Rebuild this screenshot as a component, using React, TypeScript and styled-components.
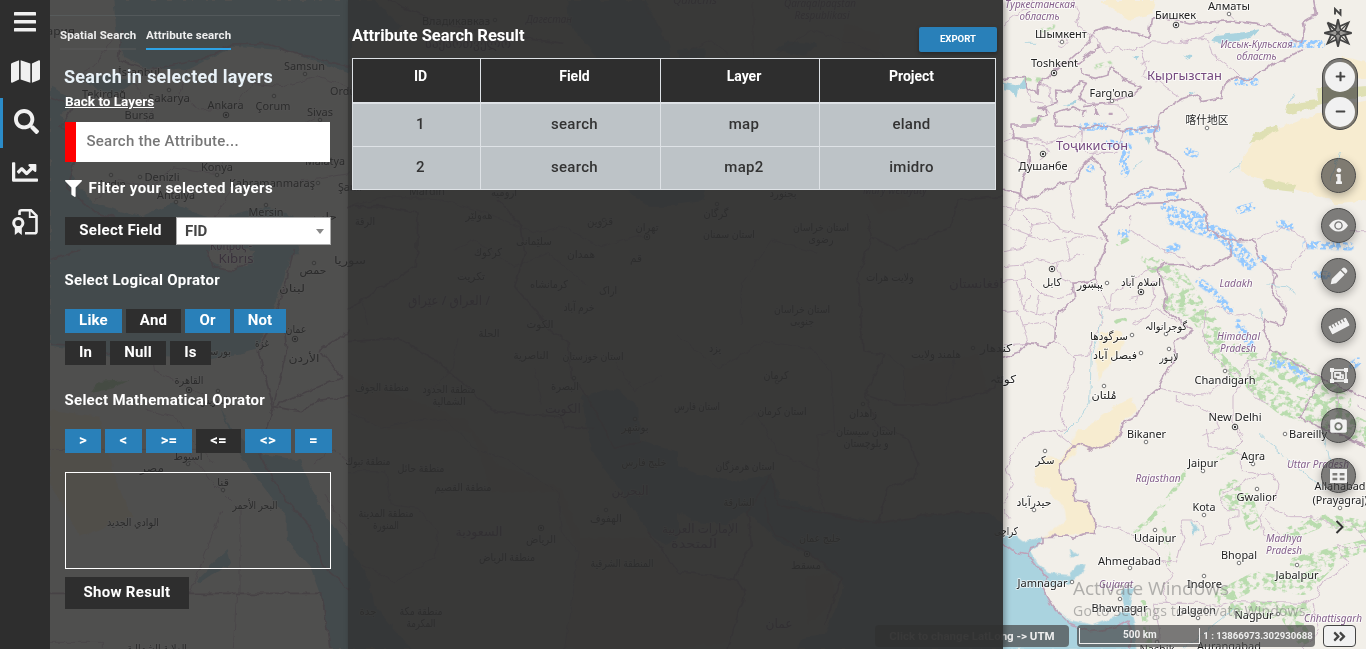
import React from 'react';
import styled, { createGlobalStyle, css } from 'styled-components';
import { FaMap, FaSearch, FaChartLine, FaFilter, FaInfo, FaRulerHorizontal, FaAngleDoubleRight, FaPlus, FaMinus } from 'react-icons/fa';
import { IoMdCamera } from 'react-icons/io';

const GlobalStyle = createGlobalStyle`
  * { box-sizing: border-box; }
  body { margin: 0; overflow: hidden; background: #f2efe9; }
  button, input { font: inherit; }
`;

const blue = '#2980b9';
const dark = '#2e2e2e';

/* ---------- map canvas ---------- */

const MapSvg = styled.svg`
  position: absolute;
  inset: 0;
  width: 1366px;
  height: 649px;
  .land { fill: #f7ecd0; }
  .olive { fill: #dfe0b4; }
  .water { fill: #aad3df; }
  .wood path { fill: none; stroke: #b9dcae; stroke-linecap: round; stroke-linejoin: round; }
  .ice path { fill: none; stroke: #94c9ff; stroke-linecap: round; stroke-linejoin: round; }
  .country { fill: none; stroke: #bda3b9; stroke-width: 5; stroke-linejoin: round; }
  .region { fill: none; stroke: #cdb6ca; stroke-width: 2.8; stroke-linejoin: round; }
  .river { fill: none; stroke: #aad3df; stroke-width: 2.5; }
`;

const MapText = styled.text<{ $kind: string }>`
  font-family: 'Noto Sans', 'DejaVu Sans', 'Noto Sans CJK SC', sans-serif;
  text-anchor: middle;
  paint-order: stroke;
  stroke: rgba(255, 255, 255, 0.65);
  stroke-width: 2px;
  stroke-linejoin: round;
  font-size: 11px;
  fill: #222;
  ${p => p.$kind === 'region' && css`font-style: italic; font-size: 10px; fill: #85608c;`}
  ${p => p.$kind === 'country' && css`font-size: 12.5px; fill: #75497f;`}
`;

type Label = [number, number, string, number, string?];
const labels: Label[] = [
  [1040, 8, 'Туркестанская', 70, 'region'], [1039.5, 20, 'область', 40, 'region'],
  [1175.5, 19, 'Бишкек', 41], [1229, 10, 'Алматы', 42], [1061, 38, 'Шымкент', 52],
  [1054.5, 67, 'Toshkent', 47], [1111.5, 97, "Farg'ona", 44], [1207, 124, '喀什地区', 43],
  [1256.5, 48, 'Иссык-Кульская', 72, 'region'], [1256.5, 60, 'область', 40, 'region'],
  [1184.5, 80, 'Кыргызстан', 75, 'country'], [1092, 150, 'Тоҷикистон', 72, 'country'],
  [1043, 170, 'Душанбе', 49], [1052, 286, 'كابل', 19], [1090, 288, 'پېښور', 26],
  [1141, 286, 'اسلام آباد', 40], [1236, 287, 'Ladakh', 33, 'region'],
  [1166, 330, 'گوجرانوالہ', 42], [1109, 340, 'سرگودھا', 38], [1115, 359, 'فیصل آباد', 44],
  [1169, 361, 'لاہور', 19], [1104, 399, 'مُلتان', 25],
  [1238.5, 340, 'Himachal', 43, 'region'], [1238, 352, 'Pradesh', 36, 'region'],
  [1225, 384, 'Chandigarh', 61], [1235, 421, 'New Delhi', 53], [1146.5, 438, 'Bikaner', 39],
  [1308, 438, 'Bareilly', 38], [1253, 460, 'Agra', 24], [1203, 467, 'Jaipur', 30],
  [1318, 467.5, 'Uttar Pradesh', 62, 'region'], [1158, 481.5, 'Rajasthan', 45, 'region'],
  [1045, 464, 'سکر', 19], [1034, 506, 'حیدرآباد', 35], [1204, 511, 'Kota', 23],
  [1256.5, 501, 'Gwalior', 40], [1340, 490, 'Allahabad', 51], [1340, 504, '(Prayagraj)', 55],
  [1155, 542, 'Udaipur', 42], [1284, 541.5, 'Madhya', 36, 'region'], [1284, 553.5, 'Pradesh', 36, 'region'],
  [1129.5, 564.5, 'Ahmedabad', 63], [1239, 559, 'Bhopal', 36], [1297, 579, 'Jabalpur', 43],
  [1042.5, 587, 'Jamnagar', 50], [1116, 587.5, 'Gujarat', 34, 'region'], [1204.5, 588, 'Indore', 35],
  [1119.5, 612, 'Bhavnagar', 56], [1197, 614, 'Jalgaon', 38], [1254, 618.5, 'Nagpur', 39],
  [1333, 622, 'Chhattisgarh', 58, 'region'], [1157, 653, 'Nashik', 35], [1229, 649.5, 'Aurangabad', 64],
  [1003, 383, 'کوئٹہ', 26], [1006, 535, 'کراچی', 24], [996, 352, 'کندهار', 32],
  [58, 35, 'тария', 34], [139, 76, 'İstanbul', 42], [304.5, 70, 'Samsun', 41], [104, 98, 'Tekirdağ', 44],
  [169, 102, 'Sakarya', 42], [225.5, 108.5, 'Ankara', 36], [273, 110, 'Çorum', 35], [320, 116, 'Sivas', 26],
  [139.5, 119, 'Bursa', 30], [343, 95, 'Ordu', 26], [217, 170.5, 'Konya', 32], [325, 165, 'Malatya', 40],
  [162, 181, 'Denizli', 35], [112, 188, 'Aydın', 28], [272, 187, 'Kahramanmaraş', 86], [176, 198.5, 'Antalya', 38],
  [266, 216, 'Mersin', 35], [350, 191, 'Şanlı', 24], [325, 220, 'حلب', 24],
  [231, 250, 'Κύπρος -', 42, 'country'], [236, 263, 'Kıbrıs', 35, 'country'], [350, 264, 'سوريا', 32],
  [313, 274, 'حمص', 27], [292, 292, 'لبنان', 26], [296, 333, 'عمان', 21], [262, 347, 'غزة', 14],
  [214, 355, 'بورسعيد', 34], [304, 362, 'الأردن', 31], [189, 384, 'القاهرة', 29], [214, 404, 'السويس', 28],
  [188, 460, 'أسيوط', 29], [152, 472, 'مصر', 24], [223, 486, 'قنا', 12], [255, 509, 'البحر الأحمر', 45],
  [133, 526, 'الوادي الجديد', 52], [157, 652, 'الولاية الشمالية', 60],
  [456, 25, 'Владикавказ', 68], [549, 23, 'Дагестан', 46, 'region'], [468, 48, 'საქართველო', 86, 'country'],
  [427, 195, 'Mardin', 36], [504, 196, 'ارومیه', 26], [365, 225, 'الرقة', 20], [479, 219, 'هەولێر', 27],
  [600, 225, 'قزوین', 26], [647, 231, 'تهران', 23], [534, 245, 'سلێمانی', 36], [488, 256, 'كركوك', 28],
  [581, 258, 'همدان', 28], [636, 262, 'قم', 12], [471, 280, 'تكريت', 28], [549, 288, 'کرمانشاه', 38],
  [608, 294, 'اراک', 18], [449, 305, 'العراق / عێراق /', 82, 'country'], [579, 311, 'خرم آباد', 31],
  [540, 328, 'الكوت', 27], [489, 337, 'الحلة', 21], [531, 359, 'الناصرية', 35], [593, 360, 'استان خوزستان', 61],
  [382, 391, 'منطقة الجوف', 54], [449, 393, 'منطقة الحدود', 53], [449, 405, 'الشمالية', 33],
  [565, 390, 'البصرة', 28], [563, 413, 'الكويت', 36, 'country'], [635, 431, 'بوشهر', 27],
  [368, 465, 'منطقة تبوك', 45], [421, 472, 'منطقة حائل', 47], [463, 491, 'منطقة القصيم', 57], [644, 466, 'خليج فارس', 45],
  [630, 495, 'البحرين', 37, 'country'], [606, 522, 'الهفوف', 32], [386, 517, 'منطقة المدينة', 55], [386, 529, 'المنورة', 26],
  [479, 536, 'السعودية', 47, 'country'], [541, 543, 'الرياض', 30], [507, 561, 'منطقة الرياض', 56], [622, 567, 'المنطقة الشرقية', 63],
  [368, 615, 'جدة', 17], [421, 615, 'منطقة مكة', 43], [421, 627, 'المكرمة', 29],
  [820, 7, 'Qaraqalpaqstan', 72, 'region'], [822, 19, 'Respublikasi', 55, 'region'], [695, 4, 'Qalacms', 44, 'region'],
  [783, 197, 'بجنورد', 27], [895, 194, 'Mary welaýaty', 64, 'region'], [716, 217, 'گرگان', 25],
  [729, 238, 'استان سمنان', 52], [821, 231, 'استان خراسان', 56], [821, 243, 'رضوی', 25],
  [890, 281, 'ولایت هرات', 48], [976, 288, 'افغانستان', 54, 'country'], [802, 313, 'استان خراسان', 56], [802, 325, 'جنوبی', 24],
  [715, 352, 'یزد', 12], [776, 379, 'کرمان', 25], [936, 358, 'هلمند ولایت', 50], [782, 415, 'استان کرمان', 49],
  [697, 410, 'استان فارس', 46], [863, 417, 'زاهدان', 28], [866, 435, 'استان سیستان', 60], [866, 447, 'و بلوچستان', 45],
  [745, 470, 'استان هرمزگان', 59], [739, 506, 'الشارقة', 31], [700, 533, 'الإمارات العربية', 76, 'country'], [694, 548, 'المتحدة', 46, 'country'],
  [820, 542, 'خليج عمان', 42], [806, 569, 'مسقط', 30], [779, 628, 'عمان', 27, 'country'],
];

const dots: [number, number][] = [
  [1229, 14], [1062, 42], [1112, 101], [1207, 128], [1107, 283], [1166, 334], [1132, 335], [1141, 353], [1169, 349],
  [1104, 386], [1225, 371], [1146, 442], [1285, 434], [1253, 464], [1203, 471], [1045, 451], [1034, 510], [1204, 515],
  [1257, 489], [1340, 508], [1155, 530], [1130, 568], [1239, 563], [1297, 565], [1072, 582], [1204, 576], [1120, 599],
  [1198, 618], [1278, 614], [1157, 642], [305, 74], [169, 90], [274, 96], [320, 120], [111, 175], [140, 177], [217, 175],
  [318, 183], [176, 202], [266, 205], [314, 263], [218, 391], [188, 464], [223, 490], [495, 20], [604, 220], [574, 378],
  [635, 419], [606, 510], [717, 204], [777, 382], [863, 404], [973, 348],
];
const capitals: [number, number][] = [[1176, 25], [1054, 73], [1043, 154], [1052, 269], [1141, 292], [1235, 427], [226, 115], [295, 339], [189, 390], [647, 237], [541, 528], [807, 554]];

const MapCanvas = () => (
  <MapSvg viewBox="0 0 1366 649">
    <defs>
      <filter id="speckle" x="-5%" y="-5%" width="110%" height="110%">
        <feTurbulence type="fractalNoise" baseFrequency="0.14 0.18" numOctaves="3" seed="4" result="n" />
        <feColorMatrix in="n" type="matrix" values="0 0 0 0 0  0 0 0 0 0  0 0 0 0 0  7 0 0 0 -3.2" result="m" />
        <feComposite in="SourceGraphic" in2="m" operator="in" />
      </filter>
      <filter id="lakes" x="-5%" y="-5%" width="110%" height="110%">
        <feTurbulence type="fractalNoise" baseFrequency="0.27" numOctaves="2" seed="9" result="n" />
        <feColorMatrix in="n" type="matrix" values="0 0 0 0 0  0 0 0 0 0  0 0 0 0 0  8 0 0 0 -3.5" result="m" />
        <feComposite in="SourceGraphic" in2="m" operator="in" />
      </filter>
      <filter id="rough" x="-3%" y="-3%" width="106%" height="106%">
        <feTurbulence type="fractalNoise" baseFrequency="0.12" numOctaves="2" seed="2" />
        <feDisplacementMap in="SourceGraphic" scale="6" xChannelSelector="R" yChannelSelector="G" />
      </filter>
    </defs>
    <rect width="1366" height="649" fill="#f2efe9" />

    <g filter="url(#rough)">
      <g transform="scale(.33333)">
        <path className="water" d="M340 0 350 100 370 170 440 205 560 210 700 140 850 150 1050 220V0ZM250 240 330 220 400 250 330 290ZM150 260 230 300 180 350 230 420 210 520 280 610 420 650 520 610 640 660 800 620 880 650 900 760H150Z" />
      </g>
      <g transform="translate(0 250) scale(.33333)">
        <path className="water" d="M150 0H880L850 90 820 180 770 300 620 330 450 310 380 330 230 300 150 290ZM660 470 700 540 770 610 900 630 960 770 1050 900V1197H990L970 1060 930 950 860 870V800L720 620ZM590 990 680 900 690 940 600 1000Z" />
        <path fill="#f2efe9" d="M620 10 680-10 760 0 740 50 680 60 640 40Z" />
        <path fill="#b9dcae" d="M270 430 300 395 390 390 340 415Z" />
        <path className="land" d="M150 480 300 500 350 700 400 800 240 860 150 700Z" />
      </g>
      <g transform="translate(348 0) scale(.33333)">
        <path className="water" d="M0 0H80L160 80 60 130 0 100ZM655 0H890L960 130 990 300 940 400 990 570V620L900 620 840 570 740 160 660 70Z" />
      </g>
      <g transform="translate(678 0) scale(.33333)">
        <path className="water" d="M0 150 80 145V170L0 180ZM0 560H80V600L0 610ZM290 150 330 125 420 130 380 170Z" />
        <path className="land" d="M500 70 600 100 620 500 700 620 600 640 450 400Z" />
      </g>
      <g transform="translate(348 325) scale(.33333)">
        <path className="water" d="M700 210 810 190 870 250 880 350 990 380V640L950 660 900 620 820 500 730 380ZM0 660 60 760 80 840 190 972H0Z" />
        <path className="land" d="M0 150 200 230 360 290 450 420 640 490 700 640 900 640 990 740V972H650L690 680 620 500 430 500 370 320 100 310 0 250Z" />
      </g>
      <g transform="translate(678 325) scale(.33333)">
        <path className="water" d="M0 420 60 450 180 470 280 450 310 520 430 560 600 590 750 570 930 560 975 600V972H360L370 940 440 930 500 780 400 690 300 650 240 590 200 560 140 600 50 590 0 560Z" />
        <path className="land" d="M0 740 170 760 200 810 150 950 0 972ZM680 130 900 90 930 200 770 240 680 230ZM380 760 460 740 470 830 390 900Z" />
      </g>
      <g transform="translate(1003 0) scale(.33333)">
        <path className="land" d="M1100 300 1000 320 870 370 770 400 720 470 710 510 740 530 800 545 900 575 960 590 1000 610 1100 600ZM290 0H460L450 40 380 60 330 30ZM1020 170 1100 190V240L1000 235Z" />
        <path className="olive" d="M845 345 850 315 900 305 945 300 940 265 1100 255V285L960 315 890 335ZM738 435 755 400 820 375 827 390 780 410ZM775 545 790 535 830 545 880 555 870 575 800 568Z" />
        <path className="water" d="M628 122 640 105 700 100 768 88 750 108 690 125 650 128ZM0 245 50 255 65 232 75 262 45 268 40 290 20 270 0 268ZM390 170 410 172 400 180ZM540 165 565 168 560 178ZM180 318 225 300 220 312ZM425 415 450 412 435 435ZM555 280 580 275 565 287Z" />
      </g>
      <g transform="translate(1003 215) scale(.33333)">
        <path className="land" d="M290 355 350 345 365 380 320 450 285 500 280 430ZM385 550 405 590 355 620 345 664H235L270 620 330 580Z" />
      </g>
      <g transform="translate(1003 430) scale(.33333)">
        <path className="land" d="M225-2H360L325 45 270 60 225 45 215 75 170 105 175 145 215 150V210L250 215 275 270V310L120 320 190 270 185 240 140 180 95 160 100 110 130 80 170 90 200 50Z" />
        <path className="water" d="M-10 310 40 320 60 335 120 320 110 345 80 360 105 400 140 430 200 435 220 405 248 403 235 430 200 460 120 475 150 530 200 570 270 585 340 560 360 540 355 490 370 465 395 470 385 500 380 530 395 590 400 660H-10ZM200 358 225 375 205 380ZM565 270 590 300 570 318Z" />
      </g>
    </g>

    <g className="wood" filter="url(#speckle)">
      <g transform="translate(1003 215) scale(.33333)">
        <path strokeWidth="50" d="M455 150 520 180 560 240 590 290 630 340" />
        <path strokeWidth="55" d="M500 260 580 290 640 370" />
        <path strokeWidth="30" d="M600 340 650 430 700 480M700 400 780 440 840 480" />
        <path strokeWidth="70" d="M760 500 850 570 960 600 1080 650M830 440 930 510 1010 560" />
        <path strokeWidth="14" d="M345 85 380 70M420 130 440 150M340 320 365 315" />
      </g>
      <g transform="translate(1003 430) scale(.33333)">
        <path strokeWidth="45" d="M670 190 730 210 750 280M690 220 690 170" />
        <path strokeWidth="14" d="M560 110 500 200 440 270 390 310M620 100 700 60M480 280 500 400" />
        <path strokeWidth="40" d="M860 310 960 270 1080 290M880 400 1080 350" />
        <path strokeWidth="50" d="M660 500 760 450 900 470 970 400M700 540 900 540M860 560 900 620" />
        <path strokeWidth="20" d="M420 520 440 657M1000 0 1089 40" />
      </g>
      <g transform="translate(1003 0) scale(.33333)">
        <path strokeWidth="14" d="M90 360 110 355M65 235 110 240M280 200 320 190M120 90 150 80" />
      </g>
    </g>

    <g className="ice" filter="url(#lakes)">
      <g transform="translate(1003 0) scale(.33333)">
        <path strokeWidth="24" d="M870 132H955M485 620 540 640 600 650M375 395 460 385M320 430 375 440 360 490M240 380H310M410 585 440 582M500 588H515M710 630 745 620M705 245H755M365 520 370 510M260 505H265M555 455 575 462" />
      </g>
      <g transform="translate(1003 215) scale(.33333)">
        <path strokeWidth="42" d="M510 10 600 40 660 60 700 100 740 145" />
        <path strokeWidth="24" d="M590 200 630 230 680 285M705 325 720 350 740 385M910 90 980 92 1040 95M810 445 860 450 910 490M500 105 520 95M355 55H370M830 25 860 35M775 130H780M1050 450 1065 440M940 180H970" />
      </g>
    </g>

    <g filter="url(#rough)">
      <g transform="translate(1003 0) scale(.33333)">
        <path className="region" d="M0 75 45 40 80 20 90 0M210 0 230 40 220 75 275 110 262 125M75 262 80 305 120 312 140 340M108 250 140 262 145 310M225 300 250 310 350 315 375 345 370 360 330 378M0 425 30 415 110 420 130 430 200 405 220 412 240 390M0 455 15 470 60 490M75 425 130 440 140 460 110 480M445 125 380 155 340 140 310 160 275 110M415 150 430 195 420 230 455 235 490 265 530 290M415 195 440 180M445 125 530 130 600 110 640 85M530 125 600 115 620 125 630 165 650 180 690 210 715 235M30 415 20 400M205 550 200 600 215 660M0 620 60 630 100 625 140 640 150 660M240 385 235 440 260 460 340 460 360 390M215 520 280 450M165 125 185 115 195 125 180 140 165 135M670 35 690 55M55 580 20 660" />
        <path className="country" d="M0 235 65 233 75 262 105 280 108 250 155 215 200 180 260 125 275 95 320 82 400 100 438 112 445 62 480 52 560 72 600 68 680 62 740 70 800 78 860 110 895 130 905 90 900 65 925 50 940 45 932 0M900 150 830 185 765 215 735 240 690 235 660 260 655 295 595 305 585 285 540 295 500 320 470 340 465 380 420 385 360 395 320 380 290 378 240 382 160 378 155 340 210 320 245 335 240 350M230 205 245 225 280 235 315 225 320 200 340 215 360 240 415 262 390 285 320 305 280 315 240 320M160 310 158 270 200 275 235 245 250 250 228 290 250 310M160 310 105 325 130 325 130 345 110 350 100 375 27 375 30 415 75 425 80 500 60 530 55 580 70 600M0 568 50 580 70 600 120 580 165 550 215 545 240 500 265 472 290 490 305 520 308 610 325 625 400 575 440 558 510 570 550 565 540 515 500 460 465 450 455 400 465 380M310 660 340 625 420 608 500 605 560 595 600 625 615 660M155 215 175 190 230 185 290 140 280 130" />
        <path fill="#bda3b9" d="M270 345 278 320 290 345ZM320 335H332V345H320Z" />
        <path className="river" d="M680 520 715 490M390 505 415 485M870 280 860 310M980 540 1010 460M95 130H60" />
      </g>
      <g transform="translate(1003 215) scale(.33333)">
        <path className="region" d="M380 0 380 45 440 80 490 110 545 130 570 160M750 75 830 40 880 50 905 75 910 100 860 160 810 165M810 165 815 215 850 285M0 30 80 60 90 30 60 0M90 30 150 20 180 50 250 60 300 70M0 110 60 100 80 60 140 80 190 65M130 0 170 45M0 155 60 150 100 130 160 145 200 130 190 80 240 65M160 145 175 190 215 205M60 150 70 190 0 200M70 190 120 240 180 250 215 230M40 200 60 280 110 300 155 290M0 290 40 285 60 330 130 320 155 340M80 240 60 285M60 330 75 385M110 240 100 300M240 120 200 130M0 390 75 385M275 195 320 280 325 235 360 215 400 190 440 160 475 170M320 280 285 275 300 325 270 360 260 420 215 425 210 470 180 550 175 600 190 645 95 650 80 664M155 375 215 425M320 280 380 285 440 275 455 240 450 200 490 190M385 325 430 310 460 280 520 320M385 325 400 330 440 300M400 265 410 245 380 250M600 340 605 290 640 270 670 290 700 300 740 295 780 320M600 340 620 410 660 450 700 480 720 495 690 540V620L720 664M465 520 540 535 600 540 620 530 660 500 680 470M520 540V560L590 575 630 600 650 640 600 664M705 475 735 440 790 430 800 405M735 440 740 520 760 550 800 570M1000 510 1010 664M1040 50 1089 50M1060 570 1089 590" />
        <path className="country" d="M320 0 290 35 315 80 280 160 275 195 210 205 215 250 180 285 160 300 155 375 130 395 75 385 45 415 0 430M610 0 615 45 650 60 680 75 685 120 630 150 580 160 520 145 480 145 465 165 475 200 490 240 485 280 530 320 570 345 545 370 510 380 520 430 490 470 465 520 430 550 405 600 360 625 350 664M650 60 700 78 750 75 770 130 810 165 820 180 800 220 830 265 850 290 840 330 785 315 780 345 800 380V405L850 430 920 470 1000 510 1089 550M950 500 905 580 890 610 960 640 1089 690" />
        <path className="river" d="M300 290 285 360 265 420 260 560 220 620 180 660M790 210 850 215 880 235M770 280 775 320" />
      </g>
      <g transform="translate(1003 430) scale(.33333)">
        <path className="region" d="M0 220 30 165 10 120 30 60 90 5 150 0 200 40 220 50M20 265 0 240M275 290 350 295 390 320 440 350 480 395 520 400 530 360 545 330 530 290 540 270 575 270 600 290 605 320 590 350 630 340 640 320 680 310V265L705 260V240L665 235 650 210 660 190 770 135 750 125 715 125V80L690 60 720 30 700 0M610 0 620 50 690 60M770 135 810 130 825 160 820 200 790 230 770 260 780 310 810 330 830 320 800 280 780 260M800 230 860 260 930 260 1000 290 1040 270 1089 330M1000 350 1035 400 990 440 960 450 940 500 900 520 700 515 640 530 600 520 490 520 480 470 510 430 480 395M465 657 470 600 450 520 495 520M930 520 950 600 900 657M1089 350 1000 350" />
        <path className="country" d="M355 0 330 40 270 60 225 40 200 60 170 105 175 145 215 150V210L250 215 275 270V310L240 312 210 325 190 318 120 320V340L80 350 75 375M0 340 30 365 75 375 105 415 135 440 120 475 150 530 200 580 260 605 330 595 375 570 385 600 380 657M975-12 1040 30 1089 50" />
        <path className="river" d="M770 10 800 40 860 90 900 130 960 170M960 0 975 80 985 150M540 657 700 530" />
      </g>
      <g transform="scale(.33333)">
        <path className="region" d="M340 120 280 200 200 240M560 210 540 280 600 330 700 320 760 250 850 260 950 230 1050 260M400 250 460 330 420 420 500 440 560 400 680 420 720 380 850 400 960 340M230 420 330 400M280 610 340 540 460 560 520 500 640 520 700 450 820 480M640 660 700 560 820 560 1050 520" />
        <path className="country" d="M365 90 355 180 440 210 600 180 700 135 800 130 880 160 1050 200M150 290 220 320 180 380 240 430 200 560 290 640 420 670" />
      </g>
      <g transform="translate(0 250) scale(.33333)">
        <path className="region" d="M150 598H640M455 310 460 360 540 400 620 440 700 470M560 600 640 700 680 740 720 780V1030M665 780 570 1030M440 480 520 500 640 640M940 640 1000 600 1050 640M150 1177H310V1197M710 1030 700 1197M970 730 1050 850" />
        <path className="country" d="M150 30 240 0M620 0 640 50 700 60 760 30M880 0 860 90 830 180 775 305 820 470 860 300 850 200M960 300 1050 240M960 300 1025 380 820 470M820 470 900 485 960 450 1050 440M820 470 780 620 850 740 930 830 970 950 1050 1020M150 285 250 290 380 325M150 1030H965L990 1197" />
      </g>
      <g transform="translate(348 0) scale(.33333)">
        <path className="region" d="M0 620 120 590 280 600 420 640 560 700 640 680 760 740 900 700M320 750 380 720 500 800 600 760 720 860M40 900 60 975M880 0 960 130" />
        <path className="country" d="M0 620 100 620 210 640 205 800 100 860 0 930M120 0 280 70 480 110 650 130M450 600 520 680 530 760 500 860 600 975" />
      </g>
      <g transform="translate(348 325) scale(.33333)">
        <path className="region" d="M0 260 100 310 220 280 300 290 380 370 470 400 630 500 640 620 690 680 650 972M0 440H110L130 540 210 550 270 620 260 700 140 770 40 720M330 40 310 140 230 210M560 130 580 240M800 110 860 200 940 150" />
        <path className="country" d="M0 50 150 40 270 110 440 260 640 275 650 310 740 310M580 0 660 50 670 150 720 220 800 370 880 350M900 620 990 740" />
      </g>
      <g transform="translate(678 325) scale(.33333)">
        <path className="region" d="M0 30 120 130 260 50 400 70 460 140 470 320 420 330 420 480 440 560M680 230V130L620 80M800 230 830 90M190 300 230 260 300 380 420 440" />
        <path className="country" d="M550 0 555 80 620 90 560 210 660 240 770 240 930 200 975 160M560 210 600 300 690 340 720 420 710 460 630 490 600 595 750 570 930 560M0 740 170 760 200 800 150 972M170 760 220 660 210 560 280 450 300 540 600 595M260 520 280 620 400 690 490 760 440 900" />
      </g>
      <g transform="translate(678 0) scale(.33333)">
        <path className="region" d="M225 0V170M0 170 100 120 150 160M190 975V850L280 720 420 760M300 160 400 90 520 130 620 170" />
        <path className="country" d="M570 640 580 710 660 750 820 680 840 600 975 590M580 710 540 830 550 975" />
      </g>
    </g>

    {dots.map(([x, y]) => <circle key={`${x}-${y}`} cx={x} cy={y} r="1.8" fill="#fff" stroke="#555" strokeWidth=".8" />)}
    {capitals.map(([x, y]) => (
      <g key={`${x}-${y}`}>
        <circle cx={x} cy={y} r="2.8" fill="#fff" stroke="#333" strokeWidth=".9" />
        <circle cx={x} cy={y} r="1.2" fill="#333" />
      </g>
    ))}
    {labels.map(([x, y, t, w, kind]) => (
      <MapText key={`${t}-${x}-${y}`} x={x} y={y} $kind={kind ?? 'city'} textLength={w} lengthAdjust="spacingAndGlyphs">{t}</MapText>
    ))}
  </MapSvg>
);

/* ---------- shell ---------- */

const Screen = styled.div`
  position: relative;
  display: flex;
  width: 1366px;
  height: 649px;
  overflow: hidden;
  font-family: Roboto, 'Liberation Sans', sans-serif;
  color: #fff;
`;

const Rail = styled.nav`
  position: relative;
  z-index: 2;
  display: flex;
  flex-direction: column;
  width: 50px;
  background: ${dark};
`;

const RailItem = styled.a<{ $active?: boolean; $first?: boolean }>`
  display: flex;
  align-items: center;
  justify-content: center;
  height: ${p => (p.$first ? 48 : 50)}px;
  padding: ${p => (p.$first ? '0 0 5px' : '0 0 3px')};
  border-left: 3px solid ${p => (p.$active ? '#2b8cc9' : 'transparent')};
  border-right: ${p => (p.$active ? 0 : 3)}px solid transparent;
  color: #f1f1f1;
`;

const SidePanel = styled.aside`
  position: relative;
  z-index: 2;
  width: 298px;
  padding: 15px 16px 0 15px;
  background: rgba(46, 46, 46, 0.83);
`;

const Tabs = styled.div`
  display: flex;
  gap: 10px;
  width: 290px;
  height: 35px;
  margin-left: -15px;
  padding-left: 10px;
  border-top: 1px solid rgba(90, 96, 97, 0.7);
`;

const Tab = styled.a<{ $active?: boolean }>`
  width: ${p => (p.$active ? 85 : 76)}px;
  padding-top: 12px;
  border-bottom: 2px solid ${p => (p.$active ? '#2ea3e6' : 'rgba(90, 90, 90, 0.5)')};
  font-size: 11.5px;
  font-weight: 700;
  letter-spacing: 0.12px;
  line-height: 15px;
  white-space: nowrap;
  color: #eee;
`;

const Title = styled.h2`
  margin: 16px 0 0 -1px;
  font-size: 18px;
  font-weight: 700;
  letter-spacing: 0.28px;
  line-height: 22px;
  color: #e8f1f7;
  white-space: nowrap;
`;

const BackLink = styled.a`
  display: block;
  margin: 4px 0 0;
  font-size: 13.5px;
  font-weight: 700;
  line-height: 18px;
  text-decoration: underline;
`;

const SearchInput = styled.input`
  display: block;
  width: 265px;
  height: 40px;
  margin-top: 12px;
  padding: 0 10px 2px 10.5px;
  border: 0;
  border-left: 11px solid #f00;
  background: #fff;
  font-size: 15px;
  font-weight: 500;
  letter-spacing: 0.25px;
  outline: none;
  &::placeholder { color: #777; opacity: 1; }
`;

const Heading = styled.h3<{ $top: number; $track?: number }>`
  display: flex;
  align-items: center;
  gap: 7px;
  margin: ${p => p.$top}px 0 0 -0.5px;
  font-size: 15px;
  font-weight: 700;
  letter-spacing: ${p => p.$track ?? 0.27}px;
  line-height: 20px;
  white-space: nowrap;
`;

const FieldRow = styled.div`
  display: flex;
  height: 28px;
  margin: 19px 0 0;
`;

const FieldLabel = styled.span`
  width: 111px;
  background: ${dark};
  font-size: 15px;
  font-weight: 700;
  letter-spacing: 0.3px;
  line-height: 26px;
  text-align: center;
`;

const Select = styled.div`
  display: flex;
  justify-content: space-between;
  align-items: center;
  width: 155px;
  padding: 0 6px 0 8px;
  border: 1px solid #aaa;
  background: #fff;
  color: #444;
  font-size: 15px;
  font-weight: 700;
  &::after {
    content: '';
    border: 4px solid transparent;
    border-top: 5px solid #888;
    border-bottom: 0;
  }
`;

const ButtonRow = styled.div<{ $top: number }>`
  display: flex;
  gap: 4px;
  margin-top: ${p => p.$top}px;
`;

const OpButton = styled.button<{ $w: number; $on?: boolean }>`
  flex: none;
  width: ${p => p.$w}px;
  height: 24px;
  padding: 0 0 2px;
  border: 0;
  background: ${p => (p.$on ? blue : dark)};
  color: #fff;
  font-size: 15px;
  font-weight: 700;
  letter-spacing: 0.2px;
  line-height: 22px;
`;

const QueryBox = styled.div`
  width: 266px;
  height: 97px;
  margin-top: 19px;
  border: 1px solid #fff;
`;

const ShowButton = styled.button`
  width: 124px;
  height: 32px;
  margin-top: 8px;
  padding: 0 0 2px;
  border: 0;
  background: ${dark};
  color: #fff;
  font-size: 15px;
  font-weight: 700;
  letter-spacing: 0.3px;
`;

const ResultPanel = styled.main`
  position: relative;
  z-index: 2;
  width: 655px;
  padding: 27px 6px 0 4px;
  background: rgba(46, 46, 46, 0.95);
  box-shadow: 2px 0 6px rgba(0, 0, 0, 0.35);
`;

const ResultHead = styled.header`
  display: flex;
  justify-content: space-between;
  height: 31px;
  h2 { margin: -1px 0 0; font-size: 16.5px; font-weight: 700; line-height: 20px; }
`;

const ExportButton = styled.button`
  width: 78px;
  height: 25px;
  padding: 0 0 2px;
  border: 0;
  border-radius: 2px;
  background: ${blue};
  box-shadow: 0 2px 4px rgba(0, 0, 0, 0.35);
  color: #fff;
  font-size: 9.6px;
  font-weight: 700;
`;

const Table = styled.table`
  width: 644px;
  table-layout: fixed;
  border-collapse: collapse;
  th, td { border: 1px solid #dee2e6; padding: 0 0 0 8px; text-align: center; }
  th { height: 44px; padding-bottom: 9px; border-bottom-width: 2px; background: ${dark}; font-size: 14px; font-weight: 700; }
  td { height: 43.500px; background: #bdc3c7; color: #333; font-size: 15px; font-weight: 500; letter-spacing: 0.3px; padding-bottom: 1px; }
`;

const rows = [['1', 'search', 'map', 'eland'], ['2', 'search', 'map2', 'imidro']];

/* ---------- map controls ---------- */

const Controls = styled.div`
  display: flex;
  flex: 1;
  flex-direction: column;
  align-items: flex-end;
  position: relative;
  z-index: 1;
  padding: 7px 10px 0 0;
`;

const Compass = styled.svg`
  width: 36px;
  height: 44px;
`;

const ZoomPill = styled.div`
  display: flex;
  flex-direction: column;
  align-items: center;
  gap: 5px;
  width: 36px;
  height: 72px;
  margin: 7px -2px 28px 0;
  padding: 2.5px 0 0;
  border: 1px solid #444;
  border-radius: 18px;
  background: rgba(60, 60, 60, 0.65);
`;

const ZoomButton = styled.button`
  display: grid;
  place-items: center;
  width: 30px;
  height: 30px;
  padding: 0;
  border: 0;
  border-radius: 50%;
  background: #f1f1f1;
  color: #444;
`;

const RoundButton = styled.button`
  display: grid;
  place-items: center;
  width: 35px;
  height: 35px;
  margin-bottom: 15px;
  padding: 0;
  border: 1px solid #484848;
  border-radius: 50%;
  background: rgba(60, 60, 60, 0.64);
  box-shadow: 0 3px 8px rgba(0, 0, 0, 0.3);
  color: #f1f1f1;
`;

const Chevron = styled.svg`
  width: 9px;
  height: 14px;
  margin: 12px 12px 0 0;
`;

const FooterBar = styled.div`
  position: absolute;
  z-index: 1;
  left: 875px;
  bottom: 2px;
  display: flex;
  gap: 8px;
  height: 22px;
  font-size: 11.5px;
  font-weight: 700;
  color: #eee;
  white-space: nowrap;
`;

const Chip = styled.div<{ $w: number }>`
  display: flex;
  align-items: center;
  justify-content: center;
  width: ${p => p.$w}px;
  border-radius: 4px;
  background: rgba(70, 70, 70, 0.7);
`;

const ScaleLine = styled.span`
  width: 121px;
  height: 16px;
  margin-right: 3px;
  border: 1px solid #eee;
  border-top: 0;
  font-size: 10px;
  line-height: 14px;
  text-align: center;
`;

const Ratio = styled.span`
  padding-bottom: 2px;
  font-size: 9.6px;
`;

const Collapse = styled.button`
  display: grid;
  place-items: center;
  width: 33px;
  height: 22px;
  padding: 0;
  border: 1px solid #444;
  border-radius: 4px;
  background: #f1f1f1;
  color: #444;
`;

const Watermark = styled.div`
  position: absolute;
  z-index: 1;
  left: 1073px;
  top: 576px;
  color: rgba(120, 120, 120, 0.55);
  font-family: 'Open Sans', sans-serif;
  white-space: nowrap;
  strong { display: block; font-size: 19px; font-weight: 400; line-height: 25px; }
  span { display: block; font-size: 14px; line-height: 20px; letter-spacing: 0.2px; }
`;

const MenuIcon = () => (
  <svg width="24" height="22" viewBox="0 0 24 22" fill="currentColor">
    <rect x="1" y="1" width="22" height="3.6" rx=".6" /><rect x="1" y="9" width="22" height="3.6" rx=".6" /><rect x="1" y="17" width="22" height="3.6" rx=".6" />
  </svg>
);

const CertificateIcon = () => (
  <svg width="28" height="28" viewBox="0 0 28 28" fill="none" stroke="currentColor" strokeWidth="2.6">
    <path d="M8.500 7V4Q8.500 2.200 10.500 2.200H20L25.500 7.700V23.500Q25.500 25.300 23.500 25.300H14" />
    <path d="M18.700 2.500V9H25" strokeWidth="1.800" />
    <circle cx="7.300" cy="15" r="4.600" strokeWidth="3" />
    <path d="M3.800 18V27L7.300 24.300 10.800 27V18L7.300 20Z" fill="currentColor" stroke="none" />
  </svg>
);

const EyeIcon = () => (
  <svg width="19" height="13" viewBox="0 0 19 13">
    <path d="M0 6.500Q3.500.500 9.500.500T19 6.500Q15.500 12.500 9.500 12.500T0 6.500Z" fill="currentColor" />
    <circle cx="9.500" cy="6.500" r="3.600" fill="none" stroke="#777" strokeWidth="1.300" />
  </svg>
);

const PencilIcon = () => (
  <svg width="18" height="18" viewBox="0 0 18 18" fill="currentColor">
    <path d="M.700 17.300 1.800 11.900 10.300 3.400 14.600 7.700 6.100 16.200ZM11.200 2.500 12.700 1Q14 0 15.300 1.100L16.900 2.700Q18 4 17 5.300L15.500 6.800Z" />
  </svg>
);

const GroupIcon = () => (
  <svg width="18" height="15" viewBox="0 0 18 15" fill="none" stroke="currentColor">
    <rect x="2" y="2" width="14" height="11" strokeWidth="1.700" />
    <path d="M0 0H4V4H0ZM14 0H18V4H14ZM0 11H4V15H0ZM14 11H18V15H14Z" fill="currentColor" stroke="none" />
    <path d="M5 4.800H10.300V8.800H5ZM11 7H13V10.500H8V9.500" strokeWidth="1.700" />
  </svg>
);

const GridIcon = () => (
  <svg width="17" height="14" viewBox="0 0 17 14" fill="currentColor" fillRule="evenodd">
    <path d="M0 0H17V14H0ZM2.500 4V6.500H7.300V4ZM9.700 4V6.500H14.500V4ZM2.500 8.800V11.300H7.300V8.800ZM9.700 8.800V11.300H14.500V8.800Z" />
  </svg>
);

const CompassIcon = () => (
  <Compass viewBox="0 0 36 44">
    <path d="M15 7.500V2L20.500 7.500V2" fill="none" stroke="#444" strokeWidth="1.900" />
    <g fill="#f2efe9" stroke="#444" strokeWidth="1.900">
      <path d="M18 26 14.500 22.500 7.500 15.500 18 20 28.500 15.500 24 26 28.500 36.500 18 32 7.500 36.500 12 26 7.500 15.500" />
      <path d="M18 12.500 20.500 23.200 31.500 26 20.500 28.800 18 39.500 15.500 28.800 4.500 26 15.500 23.200Z" />
    </g>
    <path d="M18 12V40M4 26H32M8 16 28 36M28 16 8 36" stroke="#444" strokeWidth="1.100" />
  </Compass>
);

export default function App() {
  return (
    <>
      <GlobalStyle />
      <Screen>
        <MapCanvas />
        <Rail>
          <RailItem $first><MenuIcon /></RailItem>
          <RailItem><FaMap size={29} /></RailItem>
          <RailItem $active><FaSearch size={25} /></RailItem>
          <RailItem><FaChartLine size={26} /></RailItem>
          <RailItem><CertificateIcon /></RailItem>
        </Rail>

        <SidePanel>
          <Tabs>
            <Tab>Spatial Search</Tab>
            <Tab $active>Attribute search</Tab>
          </Tabs>
          <Title>Search in selected layers</Title>
          <BackLink>Back to Layers</BackLink>
          <SearchInput placeholder="Search the Attribute..." />
          <Heading $top={16} $track={0.4}><FaFilter size={17} />Filter your selected layers</Heading>
          <FieldRow>
            <FieldLabel>Select Field</FieldLabel>
            <Select>FID</Select>
          </FieldRow>
          <Heading $top={25}>Select Logical Oprator</Heading>
          <ButtonRow $top={19}>
            <OpButton $w={57} $on>Like</OpButton>
            <OpButton $w={55}>And</OpButton>
            <OpButton $w={45} $on>Or</OpButton>
            <OpButton $w={52} $on>Not</OpButton>
          </ButtonRow>
          <ButtonRow $top={8}>
            <OpButton $w={41}>In</OpButton>
            <OpButton $w={56}>Null</OpButton>
            <OpButton $w={41}>Is</OpButton>
          </ButtonRow>
          <Heading $top={25}>Select Mathematical Oprator</Heading>
          <ButtonRow $top={19}>
            <OpButton $w={36} $on>&gt;</OpButton>
            <OpButton $w={37} $on>&lt;</OpButton>
            <OpButton $w={46} $on>&gt;=</OpButton>
            <OpButton $w={45}>&lt;=</OpButton>
            <OpButton $w={46} $on>&lt;&gt;</OpButton>
            <OpButton $w={37} $on>=</OpButton>
          </ButtonRow>
          <QueryBox />
          <ShowButton>Show Result</ShowButton>
        </SidePanel>

        <ResultPanel>
          <ResultHead>
            <h2>Attribute Search Result</h2>
            <ExportButton>EXPORT</ExportButton>
          </ResultHead>
          <Table>
            <colgroup><col width="128" /><col width="180" /><col width="159" /><col width="176" /></colgroup>
            <thead><tr><th>ID</th><th>Field</th><th>Layer</th><th>Project</th></tr></thead>
            <tbody>
              {rows.map(r => <tr key={r[0]}>{r.map((c, i) => <td key={i}>{c}</td>)}</tr>)}
            </tbody>
          </Table>
        </ResultPanel>

        <Controls>
          <CompassIcon />
          <ZoomPill>
            <ZoomButton><FaPlus size={11} /></ZoomButton>
            <ZoomButton><FaMinus size={11} /></ZoomButton>
          </ZoomPill>
          <RoundButton><FaInfo size={16} /></RoundButton>
          <RoundButton><EyeIcon /></RoundButton>
          <RoundButton><PencilIcon /></RoundButton>
          <RoundButton><FaRulerHorizontal size={20} transform="rotate(-28)" /></RoundButton>
          <RoundButton><GroupIcon /></RoundButton>
          <RoundButton><IoMdCamera size={19} /></RoundButton>
          <RoundButton><GridIcon /></RoundButton>
          <Chevron viewBox="0 0 9 14"><path d="M1.500 1 7.500 7 1.500 13" fill="none" stroke="#333" strokeWidth="2" /></Chevron>
        </Controls>

        <Watermark>
          <strong>Activate Windows</strong>
          <span>Go to Settings to activate Windows.</span>
        </Watermark>
        <FooterBar>
          <Chip $w={194}>Click to change LatLong -&gt; UTM</Chip>
          <Chip $w={238}>
            <ScaleLine>500 km</ScaleLine>
            <Ratio>1 : 13866973.302930688</Ratio>
          </Chip>
          <Collapse><FaAngleDoubleRight size={15} /></Collapse>
        </FooterBar>
      </Screen>
    </>
  );
}
